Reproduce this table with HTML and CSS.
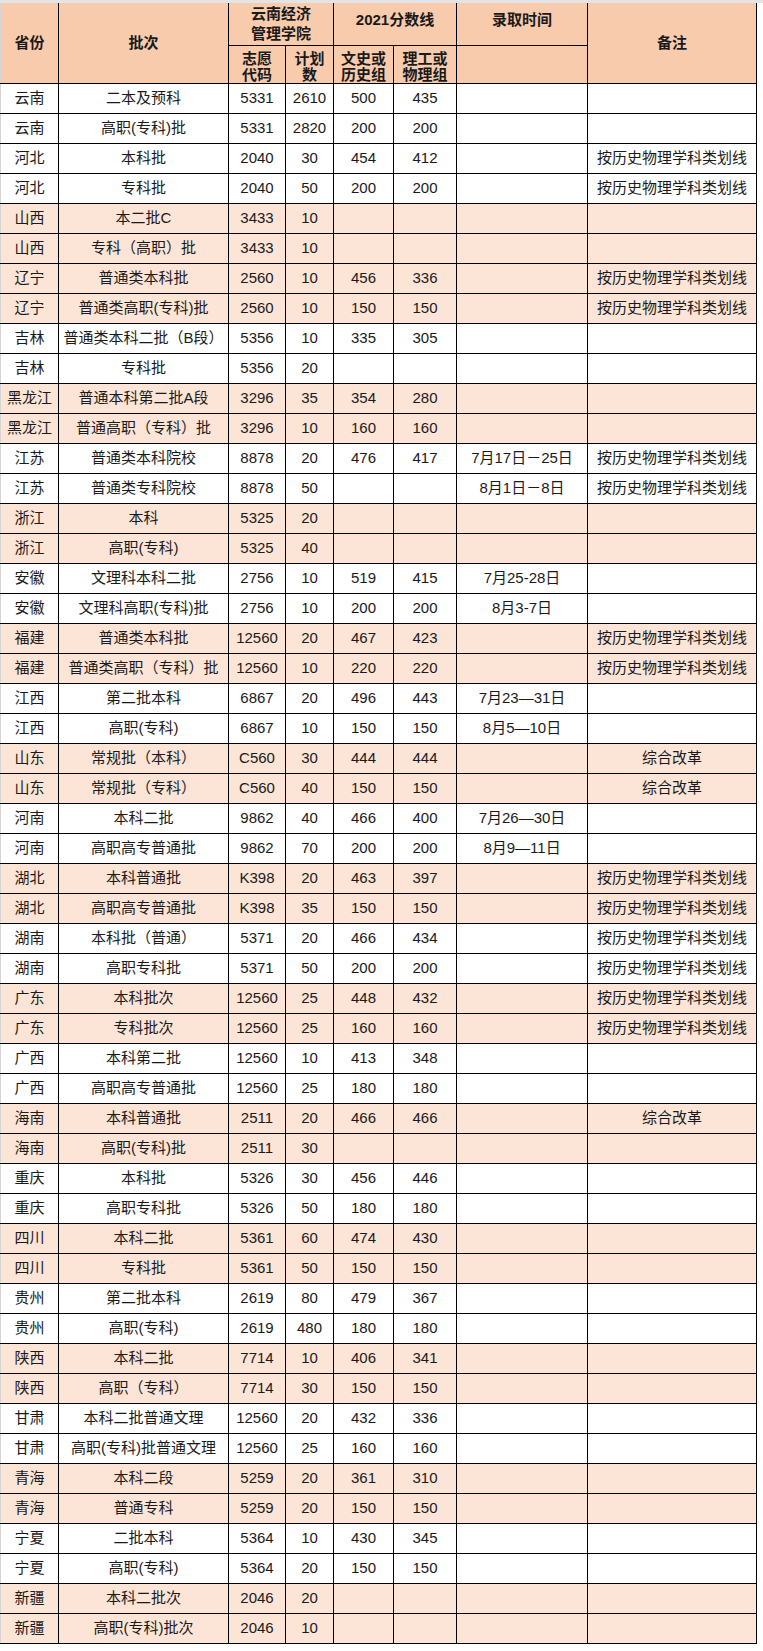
FILE: index.html
```html
<!DOCTYPE html>
<html lang="zh-CN">
<head>
<meta charset="utf-8">
<title>云南经济管理学院 2021 分数线</title>
<link rel="stylesheet" href="styles.css">
</head>
<body>
<div class="sheet">
<table class="grid">
  <colgroup>
    <col class="c-prov"><col class="c-batch"><col class="c-code"><col class="c-plan"><col class="c-wen"><col class="c-li"><col class="c-time"><col class="c-note">
  </colgroup>
  <thead>
    <tr class="h1">
      <th rowspan="2" class="first">省份</th>
      <th rowspan="2">批次</th>
      <th colspan="2" class="two">云南经济<br>管理学院</th>
      <th colspan="2" class="single">2021分数线</th>
      <th class="single">录取时间</th>
      <th rowspan="2">备注</th>
    </tr>
    <tr class="h2">
      <th class="two">志愿<br>代码</th>
      <th class="two">计划<br>数</th>
      <th class="two">文史或<br>历史组</th>
      <th class="two">理工或<br>物理组</th>
      <th></th>
    </tr>
  </thead>
  <tbody>
    <tr><td class="first">云南</td><td>二本及预科</td><td>5331</td><td>2610</td><td>500</td><td>435</td><td></td><td></td></tr>
    <tr><td class="first">云南</td><td>高职(专科)批</td><td>5331</td><td>2820</td><td>200</td><td>200</td><td></td><td></td></tr>
    <tr><td class="first">河北</td><td>本科批</td><td>2040</td><td>30</td><td>454</td><td>412</td><td></td><td>按历史物理学科类划线</td></tr>
    <tr><td class="first">河北</td><td>专科批</td><td>2040</td><td>50</td><td>200</td><td>200</td><td></td><td>按历史物理学科类划线</td></tr>
    <tr class="s"><td class="first">山西</td><td>本二批C</td><td>3433</td><td>10</td><td></td><td></td><td></td><td></td></tr>
    <tr class="s"><td class="first">山西</td><td>专科（高职）批</td><td>3433</td><td>10</td><td></td><td></td><td></td><td></td></tr>
    <tr class="s"><td class="first">辽宁</td><td>普通类本科批</td><td>2560</td><td>10</td><td>456</td><td>336</td><td></td><td>按历史物理学科类划线</td></tr>
    <tr class="s"><td class="first">辽宁</td><td>普通类高职(专科)批</td><td>2560</td><td>10</td><td>150</td><td>150</td><td></td><td>按历史物理学科类划线</td></tr>
    <tr><td class="first">吉林</td><td>普通类本科二批（B段）</td><td>5356</td><td>10</td><td>335</td><td>305</td><td></td><td></td></tr>
    <tr><td class="first">吉林</td><td>专科批</td><td>5356</td><td>20</td><td></td><td></td><td></td><td></td></tr>
    <tr class="s"><td class="first">黑龙江</td><td>普通本科第二批A段</td><td>3296</td><td>35</td><td>354</td><td>280</td><td></td><td></td></tr>
    <tr class="s"><td class="first">黑龙江</td><td>普通高职（专科）批</td><td>3296</td><td>10</td><td>160</td><td>160</td><td></td><td></td></tr>
    <tr><td class="first">江苏</td><td>普通类本科院校</td><td>8878</td><td>20</td><td>476</td><td>417</td><td>7月17日－25日</td><td>按历史物理学科类划线</td></tr>
    <tr><td class="first">江苏</td><td>普通类专科院校</td><td>8878</td><td>50</td><td></td><td></td><td>8月1日－8日</td><td>按历史物理学科类划线</td></tr>
    <tr class="s"><td class="first">浙江</td><td>本科</td><td>5325</td><td>20</td><td></td><td></td><td></td><td></td></tr>
    <tr class="s"><td class="first">浙江</td><td>高职(专科)</td><td>5325</td><td>40</td><td></td><td></td><td></td><td></td></tr>
    <tr><td class="first">安徽</td><td>文理科本科二批</td><td>2756</td><td>10</td><td>519</td><td>415</td><td>7月25-28日</td><td></td></tr>
    <tr><td class="first">安徽</td><td>文理科高职(专科)批</td><td>2756</td><td>10</td><td>200</td><td>200</td><td>8月3-7日</td><td></td></tr>
    <tr class="s"><td class="first">福建</td><td>普通类本科批</td><td>12560</td><td>20</td><td>467</td><td>423</td><td></td><td>按历史物理学科类划线</td></tr>
    <tr class="s"><td class="first">福建</td><td>普通类高职（专科）批</td><td>12560</td><td>10</td><td>220</td><td>220</td><td></td><td>按历史物理学科类划线</td></tr>
    <tr><td class="first">江西</td><td>第二批本科</td><td>6867</td><td>20</td><td>496</td><td>443</td><td>7月23—31日</td><td></td></tr>
    <tr><td class="first">江西</td><td>高职(专科)</td><td>6867</td><td>10</td><td>150</td><td>150</td><td>8月5—10日</td><td></td></tr>
    <tr class="s"><td class="first">山东</td><td>常规批（本科）</td><td>C560</td><td>30</td><td>444</td><td>444</td><td></td><td>综合改革</td></tr>
    <tr class="s"><td class="first">山东</td><td>常规批（专科）</td><td>C560</td><td>40</td><td>150</td><td>150</td><td></td><td>综合改革</td></tr>
    <tr><td class="first">河南</td><td>本科二批</td><td>9862</td><td>40</td><td>466</td><td>400</td><td>7月26—30日</td><td></td></tr>
    <tr><td class="first">河南</td><td>高职高专普通批</td><td>9862</td><td>70</td><td>200</td><td>200</td><td>8月9—11日</td><td></td></tr>
    <tr class="s"><td class="first">湖北</td><td>本科普通批</td><td>K398</td><td>20</td><td>463</td><td>397</td><td></td><td>按历史物理学科类划线</td></tr>
    <tr class="s"><td class="first">湖北</td><td>高职高专普通批</td><td>K398</td><td>35</td><td>150</td><td>150</td><td></td><td>按历史物理学科类划线</td></tr>
    <tr><td class="first">湖南</td><td>本科批（普通）</td><td>5371</td><td>20</td><td>466</td><td>434</td><td></td><td>按历史物理学科类划线</td></tr>
    <tr><td class="first">湖南</td><td>高职专科批</td><td>5371</td><td>50</td><td>200</td><td>200</td><td></td><td>按历史物理学科类划线</td></tr>
    <tr class="s"><td class="first">广东</td><td>本科批次</td><td>12560</td><td>25</td><td>448</td><td>432</td><td></td><td>按历史物理学科类划线</td></tr>
    <tr class="s"><td class="first">广东</td><td>专科批次</td><td>12560</td><td>25</td><td>160</td><td>160</td><td></td><td>按历史物理学科类划线</td></tr>
    <tr><td class="first">广西</td><td>本科第二批</td><td>12560</td><td>10</td><td>413</td><td>348</td><td></td><td></td></tr>
    <tr><td class="first">广西</td><td>高职高专普通批</td><td>12560</td><td>25</td><td>180</td><td>180</td><td></td><td></td></tr>
    <tr class="s"><td class="first">海南</td><td>本科普通批</td><td>2511</td><td>20</td><td>466</td><td>466</td><td></td><td>综合改革</td></tr>
    <tr class="s"><td class="first">海南</td><td>高职(专科)批</td><td>2511</td><td>30</td><td></td><td></td><td></td><td></td></tr>
    <tr><td class="first">重庆</td><td>本科批</td><td>5326</td><td>30</td><td>456</td><td>446</td><td></td><td></td></tr>
    <tr><td class="first">重庆</td><td>高职专科批</td><td>5326</td><td>50</td><td>180</td><td>180</td><td></td><td></td></tr>
    <tr class="s"><td class="first">四川</td><td>本科二批</td><td>5361</td><td>60</td><td>474</td><td>430</td><td></td><td></td></tr>
    <tr class="s"><td class="first">四川</td><td>专科批</td><td>5361</td><td>50</td><td>150</td><td>150</td><td></td><td></td></tr>
    <tr><td class="first">贵州</td><td>第二批本科</td><td>2619</td><td>80</td><td>479</td><td>367</td><td></td><td></td></tr>
    <tr><td class="first">贵州</td><td>高职(专科)</td><td>2619</td><td>480</td><td>180</td><td>180</td><td></td><td></td></tr>
    <tr class="s"><td class="first">陕西</td><td>本科二批</td><td>7714</td><td>10</td><td>406</td><td>341</td><td></td><td></td></tr>
    <tr class="s"><td class="first">陕西</td><td>高职（专科）</td><td>7714</td><td>30</td><td>150</td><td>150</td><td></td><td></td></tr>
    <tr><td class="first">甘肃</td><td>本科二批普通文理</td><td>12560</td><td>20</td><td>432</td><td>336</td><td></td><td></td></tr>
    <tr><td class="first">甘肃</td><td>高职(专科)批普通文理</td><td>12560</td><td>25</td><td>160</td><td>160</td><td></td><td></td></tr>
    <tr class="s"><td class="first">青海</td><td>本科二段</td><td>5259</td><td>20</td><td>361</td><td>310</td><td></td><td></td></tr>
    <tr class="s"><td class="first">青海</td><td>普通专科</td><td>5259</td><td>20</td><td>150</td><td>150</td><td></td><td></td></tr>
    <tr><td class="first">宁夏</td><td>二批本科</td><td>5364</td><td>10</td><td>430</td><td>345</td><td></td><td></td></tr>
    <tr><td class="first">宁夏</td><td>高职(专科)</td><td>5364</td><td>20</td><td>150</td><td>150</td><td></td><td></td></tr>
    <tr class="s"><td class="first">新疆</td><td>本科二批次</td><td>2046</td><td>20</td><td></td><td></td><td></td><td></td></tr>
    <tr class="s"><td class="first">新疆</td><td>高职(专科)批次</td><td>2046</td><td>10</td><td></td><td></td><td></td><td></td></tr>
  </tbody>
</table>
</div>
</body>
</html>
```

FILE: styles.css
```css
html, body {
  margin: 0;
  padding: 0;
  background: #ffffff;
}

.sheet {
  border-top: 3px solid #e4e4e4;
}

.grid {
  border-collapse: collapse;
  table-layout: fixed;
  width: 757px;
  font-family: "Liberation Sans", "Noto Sans CJK SC", sans-serif;
  font-size: 15px;
  color: #1a1a1a;
}

.c-prov { width: 58px; }
.c-batch { width: 170px; }
.c-code { width: 57px; }
.c-plan { width: 48px; }
.c-wen { width: 60px; }
.c-li { width: 63px; }
.c-time { width: 131px; }
.c-note { width: 169px; }

.grid th,
.grid td {
  border: 1px solid #000;
  padding: 0;
  text-align: center;
  vertical-align: middle;
  white-space: nowrap;
  overflow: hidden;
}

.grid th {
  background: #f8cbad;
  font-weight: bold;
  line-height: 20px;
}

.grid thead tr.h1 th {
  border-top: none;
}

.grid tr.h1 {
  height: 42px;
}

.grid tr.h2 {
  height: 38px;
}

.grid th.single {
  padding-bottom: 8px;
}

.grid tr.h2 th.two {
  line-height: 16px;
  padding-top: 5px;
}

.grid td {
  height: 29px;
  line-height: 20px;
}

.grid tr.s td {
  background: #fce4d6;
}

.grid .first {
  border-left: 1px solid #d4d4d4;
}
```
